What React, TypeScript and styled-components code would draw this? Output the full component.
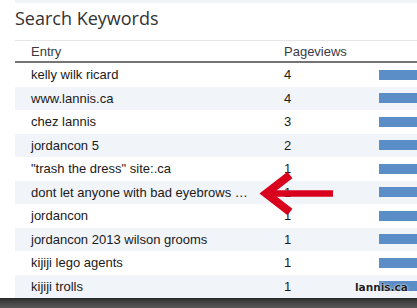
import React from 'react';
import styled, { createGlobalStyle } from 'styled-components';

const GlobalStyle = createGlobalStyle`
  html, body {
    margin: 0;
    padding: 0;
    background: #ffffff;
    overflow: hidden;
  }
`;

const Page = styled.div`
  position: relative;
  width: 417px;
  height: 308px;
  display: flex;
  flex-direction: column;
  background: #ffffff;
  font-family: 'Liberation Sans', Arial, sans-serif;
`;

const Panel = styled.div`
  padding-left: 15px;
  display: flex;
  flex-direction: column;
`;

const TopStrip = styled.div`
  height: 3px;
  background: #f2f3f8;
`;

const Heading = styled.h2`
  margin: 0;
  height: 37px;
  box-sizing: border-box;
  padding-top: 3px;
  font-family: 'Open Sans', sans-serif;
  font-weight: 400;
  font-size: 18px;
  line-height: 24px;
  color: #333333;
`;

const Grid = styled.div`
  display: grid;
  grid-template-columns: 269px 95px 1fr;
`;

const HeaderRow = styled.div`
  display: contents;

  & > div {
    height: 23px;
    border-top: 1px solid #e6e6e6;
    border-bottom: 2px solid #757575;
    color: #3a3a44;
  }
`;

const Row = styled.div<{ $shaded: boolean }>`
  display: contents;

  & > div {
    height: 23.5px;
    background: ${(p) => (p.$shaded ? '#f1f4f9' : '#ffffff')};
    color: #1a1a1a;
  }
`;

const Cell = styled.div<{ $first?: boolean }>`
  display: flex;
  align-items: center;
  box-sizing: border-box;
  padding-left: ${(p) => (p.$first ? '16px' : '0')};
  font-size: 13px;
  white-space: nowrap;
  overflow: hidden;
`;

const BarCell = styled.div`
  display: flex;
  align-items: center;
  justify-content: flex-end;
`;

const Bar = styled.div`
  height: 10px;
  background: #5b8dc6;
`;

const Floor = styled.div`
  flex: 1;
  background: linear-gradient(#262626 0px, #3d3d3d 3px, #555555 9px);
`;

const Arrow = styled.svg`
  position: absolute;
  left: 258px;
  top: 170px;
`;

const Watermark = styled.span`
  position: absolute;
  left: 355px;
  top: 281px;
  font-family: 'DejaVu Sans', sans-serif;
  font-weight: 700;
  font-size: 10.5px;
  color: #1c1c1c;
  text-shadow: 0 0 2px #ffffff, 0 0 1px #ffffff;
`;

type Keyword = { entry: string; views: number; bar: number };

const keywords: Keyword[] = [
  { entry: 'kelly wilk ricard', views: 4, bar: 38 },
  { entry: 'www.lannis.ca', views: 4, bar: 38 },
  { entry: 'chez lannis', views: 3, bar: 38 },
  { entry: 'jordancon 5', views: 2, bar: 38 },
  { entry: '"trash the dress" site:.ca', views: 1, bar: 38 },
  { entry: 'dont let anyone with bad eyebrows …', views: 1, bar: 38 },
  { entry: 'jordancon', views: 1, bar: 38 },
  { entry: 'jordancon 2013 wilson grooms', views: 1, bar: 38 },
  { entry: 'kijiji lego agents', views: 1, bar: 38 },
  { entry: 'kijiji trolls', views: 1, bar: 38 },
];

const App: React.FC = () => {
  return (
    <Page>
      <GlobalStyle />
      <Panel>
        <TopStrip />
        <Heading>Search Keywords</Heading>
        <Grid>
          <HeaderRow>
            <Cell $first>Entry</Cell>
            <Cell>Pageviews</Cell>
            <Cell />
          </HeaderRow>
          {keywords.map((k, i) => (
            <Row key={k.entry} $shaded={i % 2 === 1}>
              <Cell $first>{k.entry}</Cell>
              <Cell>{k.views}</Cell>
              <BarCell>
                <Bar style={{ width: k.bar }} />
              </BarCell>
            </Row>
          ))}
        </Grid>
      </Panel>
      <Floor />
      <Arrow width="80" height="48" viewBox="0 0 80 48">
        <g fill="none" stroke="#d8001c" strokeLinecap="butt">
          <line x1="10" y1="23.5" x2="75" y2="23.5" strokeWidth="6.5" />
          <polyline
            points="32,5 8,23.5 32,42"
            strokeWidth="8"
            strokeLinejoin="miter"
            strokeMiterlimit="10"
          />
        </g>
      </Arrow>
      <Watermark>lannis.ca</Watermark>
    </Page>
  );
};

export default App;
